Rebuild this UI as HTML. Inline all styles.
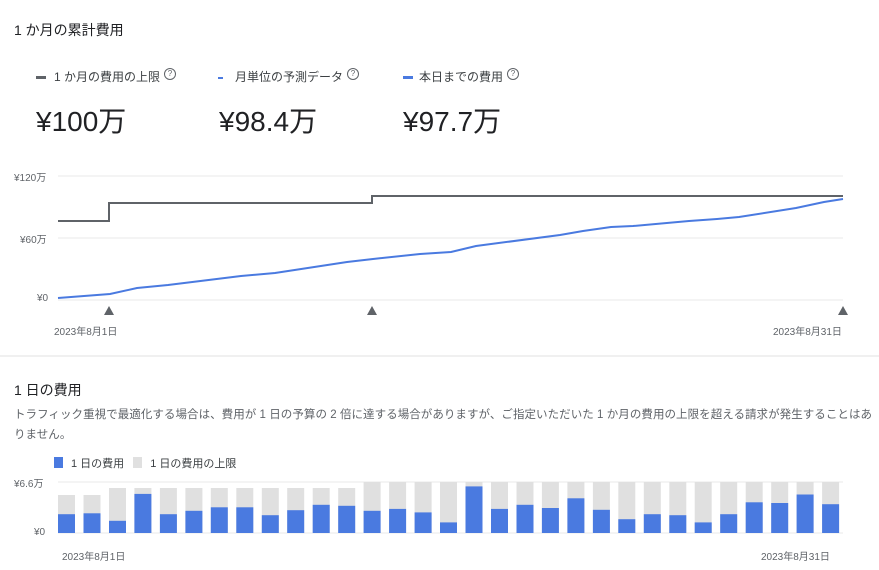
<!DOCTYPE html>
<html><head><meta charset="utf-8"><style>
body{margin:0;width:879px;height:570px;background:#fff;position:relative;overflow:hidden;font-family:"Liberation Sans","Noto Sans CJK JP",sans-serif;color:#202124}
.a{position:absolute;white-space:nowrap}
.lg{font-size:12px;color:#3c4043;top:68px}
.v{font-size:28px;top:100px;color:#202124}
.q{display:inline-block;width:10px;height:10px;border:1px solid #5f6368;border-radius:50%;font-size:8px;line-height:10px;text-align:center;vertical-align:top;margin-left:4px;color:#5f6368}
.ax{font-size:10px;color:#5f6368}
</style></head><body>
<div class="a" style="left:14px;top:20px;font-size:14px">1 か月の累計費用</div>

<div class="a lg" style="left:36px"><span style="display:inline-block;width:10px;height:3px;background:#5f6368;vertical-align:middle;margin-right:8px"></span>1 か月の費用の上限<span class="q">?</span></div>
<div class="a lg" style="left:218px"><span style="display:inline-block;width:5px;height:2px;background:#4a7ae0;vertical-align:middle;margin-right:12px"></span>月単位の予測データ<span class="q">?</span></div>
<div class="a lg" style="left:403px"><span style="display:inline-block;width:10px;height:3px;background:#4a7ae0;vertical-align:middle;margin-right:6px"></span>本日までの費用<span class="q">?</span></div>

<div class="a v" style="left:36px">¥100万</div>
<div class="a v" style="left:219px">¥98.4万</div>
<div class="a v" style="left:403px">¥97.7万</div>

<svg class="a" style="left:0;top:0" width="879" height="570">
<g stroke="#e8e8e8" stroke-width="1">
<line x1="58" y1="176" x2="843" y2="176"/><line x1="58" y1="238" x2="843" y2="238"/><line x1="58" y1="300" x2="843" y2="300"/>
<line x1="0" y1="356" x2="879" y2="356" stroke="#e0e0e0"/>
<line x1="58" y1="482" x2="843" y2="482"/><line x1="58" y1="533" x2="843" y2="533"/>
</g>
<polyline fill="none" stroke="#5f6368" stroke-width="2" points="58,221 109,221 109,203 372,203 372,196 843,196"/>
<polyline fill="none" stroke="#4a7ae0" stroke-width="2" points="58,298 110,294 137,288 168,285 241,276 275,273 347,262 373,259 420,254 451,252 476,246 560,235 583,231 611,227 633,226 689,221 717,219 739,217 796,208 824,202 843,199"/>
<g fill="#5f6368"><polygon points="109,306 104,315 114,315"/><polygon points="372,306 367,315 377,315"/><polygon points="843,306 838,315 848,315"/></g>
<g fill="#e0e0e0">
<rect x="58" y="495" width="17" height="38"/><rect x="83.5" y="495" width="17" height="38"/>
<rect x="109" y="488" width="17" height="45"/><rect x="134.4" y="488" width="17" height="45"/><rect x="159.9" y="488" width="17" height="45"/><rect x="185.4" y="488" width="17" height="45"/><rect x="210.8" y="488" width="17" height="45"/><rect x="236.3" y="488" width="17" height="45"/><rect x="261.8" y="488" width="17" height="45"/><rect x="287.2" y="488" width="17" height="45"/><rect x="312.7" y="488" width="17" height="45"/><rect x="338.2" y="488" width="17" height="45"/>
<rect x="363.6" y="482" width="17" height="51"/><rect x="389.1" y="482" width="17" height="51"/><rect x="414.6" y="482" width="17" height="51"/><rect x="440" y="482" width="17" height="51"/><rect x="465.5" y="482" width="17" height="51"/><rect x="491" y="482" width="17" height="51"/><rect x="516.5" y="482" width="17" height="51"/><rect x="541.9" y="482" width="17" height="51"/><rect x="567.4" y="482" width="17" height="51"/><rect x="592.9" y="482" width="17" height="51"/><rect x="618.3" y="482" width="17" height="51"/><rect x="643.8" y="482" width="17" height="51"/><rect x="669.3" y="482" width="17" height="51"/><rect x="694.7" y="482" width="17" height="51"/><rect x="720.2" y="482" width="17" height="51"/><rect x="745.7" y="482" width="17" height="51"/><rect x="771.2" y="482" width="17" height="51"/><rect x="796.6" y="482" width="17" height="51"/><rect x="822.1" y="482" width="17" height="51"/>
</g>
<g fill="#4a7ae0">
<rect x="58" y="514.2" width="17" height="18.8"/><rect x="83.5" y="513.3" width="17" height="19.7"/><rect x="109" y="520.8" width="17" height="12.2"/><rect x="134.4" y="493.9" width="17" height="39.1"/><rect x="159.9" y="514.2" width="17" height="18.8"/><rect x="185.4" y="510.8" width="17" height="22.2"/><rect x="210.8" y="507.3" width="17" height="25.7"/><rect x="236.3" y="507.3" width="17" height="25.7"/><rect x="261.8" y="515.2" width="17" height="17.8"/><rect x="287.2" y="510.2" width="17" height="22.8"/><rect x="312.7" y="504.8" width="17" height="28.2"/><rect x="338.2" y="505.8" width="17" height="27.2"/><rect x="363.6" y="510.8" width="17" height="22.2"/><rect x="389.1" y="508.9" width="17" height="24.1"/><rect x="414.6" y="512.4" width="17" height="20.6"/><rect x="440" y="522.4" width="17" height="10.6"/><rect x="465.5" y="486.4" width="17" height="46.6"/><rect x="491" y="508.9" width="17" height="24.1"/><rect x="516.5" y="504.8" width="17" height="28.2"/><rect x="541.9" y="508" width="17" height="25"/><rect x="567.4" y="498.3" width="17" height="34.7"/><rect x="592.9" y="509.8" width="17" height="23.2"/><rect x="618.3" y="519.2" width="17" height="13.8"/><rect x="643.8" y="514.2" width="17" height="18.8"/><rect x="669.3" y="515.2" width="17" height="17.8"/><rect x="694.7" y="522.4" width="17" height="10.6"/><rect x="720.2" y="514.2" width="17" height="18.8"/><rect x="745.7" y="502.3" width="17" height="30.7"/><rect x="771.2" y="503" width="17" height="30"/><rect x="796.6" y="494.5" width="17" height="38.5"/><rect x="822.1" y="504.2" width="17" height="28.8"/>
</g>
</svg>

<div class="a ax" style="left:14px;top:169px">¥120万</div>
<div class="a ax" style="left:20px;top:231px">¥60万</div>
<div class="a ax" style="left:37px;top:293px">¥0</div>
<div class="a ax" style="left:54px;top:323px">2023年8月1日</div>
<div class="a ax" style="left:773px;top:323px">2023年8月31日</div>

<div class="a" style="left:14px;top:380px;font-size:14px">1 日の費用</div>
<div class="a" style="left:14px;top:405px;font-size:11.5px;color:#5f6368;line-height:20px;letter-spacing:0.05px">トラフィック重視で最適化する場合は、費用が 1 日の予算の 2 倍に達する場合がありますが、ご指定いただいた 1 か月の費用の上限を超える請求が発生することはあ<br>りません。</div>
<div class="a" style="left:54px;top:455px;font-size:11px;color:#3c4043"><span style="display:inline-block;width:9px;height:11px;background:#4a7ae0;vertical-align:-1px;margin-right:8px"></span>1 日の費用 <span style="display:inline-block;width:9px;height:11px;background:#e0e0e0;vertical-align:-1px;margin:0 8px 0 6px"></span>1 日の費用の上限</div>
<div class="a ax" style="left:14px;top:475px">¥6.6万</div>
<div class="a ax" style="left:34px;top:527px">¥0</div>
<div class="a ax" style="left:62px;top:548px">2023年8月1日</div>
<div class="a ax" style="left:761px;top:548px">2023年8月31日</div>
</body></html>
